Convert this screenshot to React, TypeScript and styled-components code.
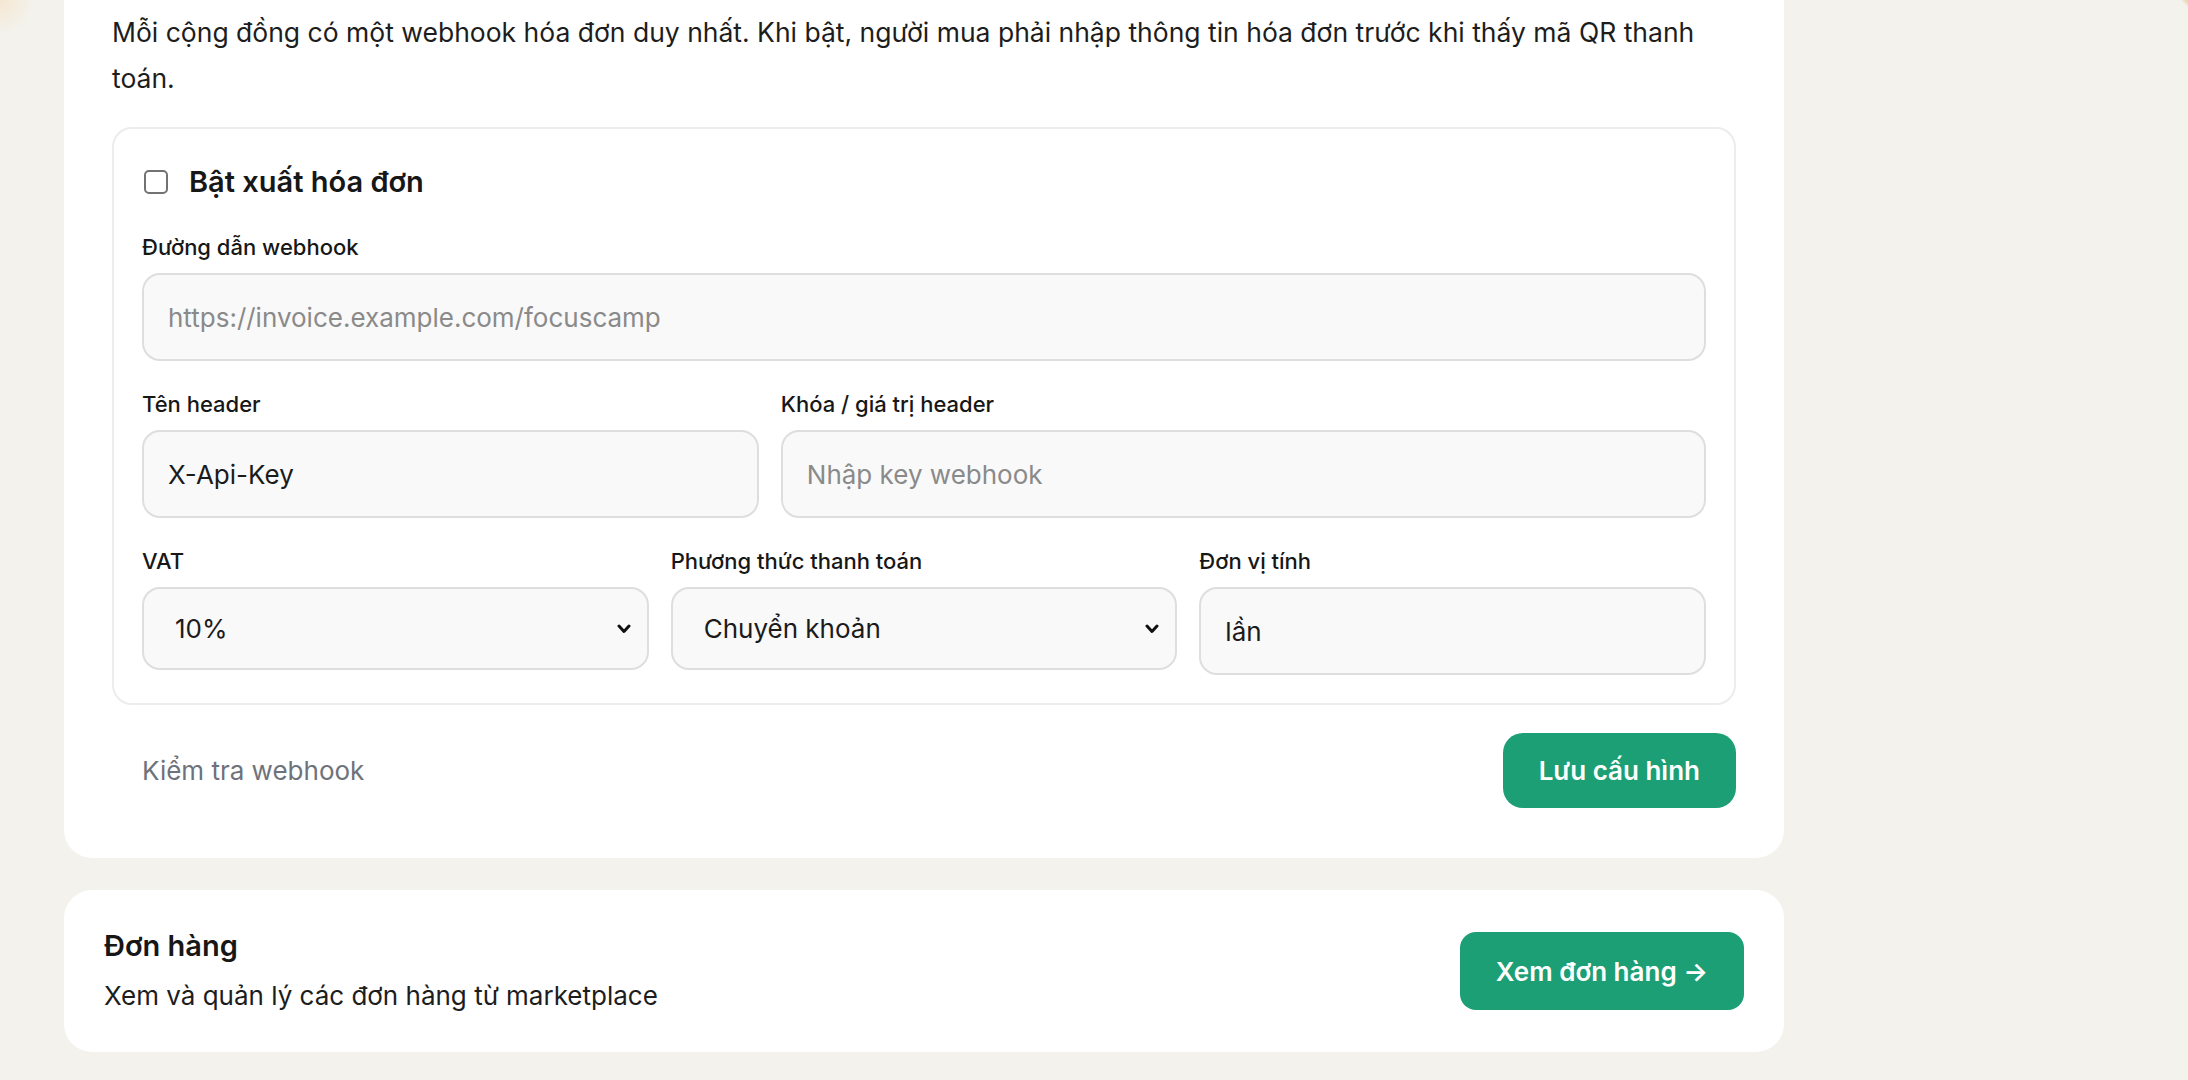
import { useState } from 'react'
import styled, { createGlobalStyle } from 'styled-components'

const GlobalStyle = createGlobalStyle`
  * {
    box-sizing: border-box;
  }

  body {
    margin: 0;
    font-family: Inter, 'Noto Sans', 'Liberation Sans', sans-serif;
    color: #1b1b1b;
    background-color: #f3f2ec;
    background-image:
      radial-gradient(circle at 0 0, rgba(248, 214, 170, 0.4), rgba(248, 214, 170, 0) 34px),
      radial-gradient(circle at 2250px -60px, #e8d7b3 0, #e8d7b3 88px, rgba(232, 215, 179, 0) 92px);
    background-repeat: no-repeat;
    min-height: 1080px;
  }
`

const Page = styled.main`
  display: flex;
  flex-direction: column;
  gap: 32px;
  width: 1720px;
  margin-left: 64px;
  padding-bottom: 27px;
`

const Card = styled.section<{ $cut?: boolean }>`
  background: #ffffff;
  border-radius: ${({ $cut }) => ($cut ? '0 0 28px 28px' : '28px')};
  padding: ${({ $cut }) => ($cut ? '9px 48px 50px' : '38px 40px')};
`

const Intro = styled.p`
  margin: 0 0 26px;
  font-size: 26.5px;
  line-height: 46px;
  color: #1d1d1d;
`

const Box = styled.div`
  border: 2px solid #ececec;
  border-radius: 20px;
  padding: 30px 28px 28px;
  display: flex;
  flex-direction: column;
  gap: 27px;
`

const ToggleRow = styled.label`
  display: flex;
  align-items: center;
  gap: 21px;
  height: 45px;
  padding-left: 2px;
  font-size: 29px;
  font-weight: 600;
  color: #171717;
  cursor: pointer;
`

const Check = styled.input`
  appearance: none;
  margin: 0;
  width: 24px;
  height: 24px;
  border: 2px solid #727272;
  border-radius: 5px;
  background: #ffffff;
`

const Grid = styled.div<{ $cols: string }>`
  display: grid;
  grid-template-columns: ${({ $cols }) => $cols};
  column-gap: 22px;
`

const Field = styled.div`
  display: flex;
  flex-direction: column;
  gap: 10px;
  min-width: 0;
`

const Label = styled.label`
  font-size: 22px;
  line-height: 32px;
  font-weight: 500;
  color: #171717;
`

const Input = styled.input`
  width: 100%;
  height: 88px;
  padding: 0 24px;
  border: 2px solid #dedede;
  border-radius: 18px;
  background: #f9f9f9;
  font-family: inherit;
  font-size: 26px;
  color: #1b1b1b;

  &::placeholder {
    color: #8a8a8a;
  }

  &:focus {
    outline: none;
    border-color: #1d9f75;
  }
`

const SelectWrap = styled.div`
  position: relative;
`

const Select = styled.select`
  appearance: none;
  width: 100%;
  height: 83px;
  padding: 0 48px 0 31px;
  border: 2px solid #dedede;
  border-radius: 18px;
  background: #f9f9f9;
  font-family: inherit;
  font-size: 26px;
  color: #1b1b1b;

  &:focus {
    outline: none;
    border-color: #1d9f75;
  }
`

const Chevron = styled.svg`
  position: absolute;
  right: 18px;
  top: 50%;
  transform: translateY(-50%);
  pointer-events: none;
`

const Actions = styled.div`
  display: flex;
  align-items: center;
  justify-content: space-between;
  margin-top: 28px;
`

const GhostButton = styled.button`
  border: none;
  background: none;
  padding: 0 0 0 30px;
  font-family: inherit;
  font-size: 26px;
  color: #6e737b;
  cursor: pointer;
`

const PrimaryButton = styled.button<{ $tall?: boolean }>`
  height: ${({ $tall }) => ($tall ? '78px' : '75px')};
  padding: 0 36px;
  border: none;
  border-radius: ${({ $tall }) => ($tall ? '16px' : '20px')};
  background: #1c9f75;
  color: #ffffff;
  font-family: inherit;
  font-size: 26px;
  font-weight: 600;
  cursor: pointer;

  &:hover {
    background: #178a65;
  }
`

const OrdersRow = styled.div`
  display: flex;
  align-items: center;
  justify-content: space-between;
`

const OrdersTitle = styled.h2`
  margin: 0 0 14px;
  font-size: 29px;
  line-height: 36px;
  font-weight: 600;
  color: #171717;
`

const OrdersText = styled.p`
  margin: 0;
  font-size: 26px;
  line-height: 36px;
  color: #1d1d1d;
`

function SelectArrow() {
  return (
    <Chevron width="14" height="10" viewBox="0 0 14 10" aria-hidden="true">
      <polyline points="2,2 7,7.5 12,2" fill="none" stroke="#111" strokeWidth="3" strokeLinecap="round" strokeLinejoin="round" />
    </Chevron>
  )
}

export default function App() {
  const [enabled, setEnabled] = useState(false)
  const [webhookUrl, setWebhookUrl] = useState('')
  const [headerName, setHeaderName] = useState('X-Api-Key')
  const [headerValue, setHeaderValue] = useState('')
  const [vat, setVat] = useState('10')
  const [payment, setPayment] = useState('bank')
  const [unit, setUnit] = useState('lần')

  return (
    <>
      <GlobalStyle />
      <Page>
        <Card $cut>
          <Intro>
            Mỗi cộng đồng có một webhook hóa đơn duy nhất. Khi bật, người mua phải nhập thông tin hóa đơn trước khi thấy mã QR thanh toán.
          </Intro>

          <Box>
            <ToggleRow>
              <Check type="checkbox" checked={enabled} onChange={(e) => setEnabled(e.target.checked)} />
              Bật xuất hóa đơn
            </ToggleRow>

            <Field>
              <Label htmlFor="webhook-url">Đường dẫn webhook</Label>
              <Input
                id="webhook-url"
                value={webhookUrl}
                onChange={(e) => setWebhookUrl(e.target.value)}
                placeholder="https://invoice.example.com/focuscamp"
              />
            </Field>

            <Grid $cols="2fr 3fr">
              <Field>
                <Label htmlFor="header-name">Tên header</Label>
                <Input id="header-name" value={headerName} onChange={(e) => setHeaderName(e.target.value)} />
              </Field>
              <Field>
                <Label htmlFor="header-value">Khóa / giá trị header</Label>
                <Input
                  id="header-value"
                  value={headerValue}
                  onChange={(e) => setHeaderValue(e.target.value)}
                  placeholder="Nhập key webhook"
                />
              </Field>
            </Grid>

            <Grid $cols="1fr 1fr 1fr">
              <Field>
                <Label htmlFor="vat">VAT</Label>
                <SelectWrap>
                  <Select id="vat" value={vat} onChange={(e) => setVat(e.target.value)}>
                    <option value="0">0%</option>
                    <option value="5">5%</option>
                    <option value="8">8%</option>
                    <option value="10">10%</option>
                  </Select>
                  <SelectArrow />
                </SelectWrap>
              </Field>
              <Field>
                <Label htmlFor="payment">Phương thức thanh toán</Label>
                <SelectWrap>
                  <Select id="payment" value={payment} onChange={(e) => setPayment(e.target.value)}>
                    <option value="bank">Chuyển khoản</option>
                    <option value="cash">Tiền mặt</option>
                  </Select>
                  <SelectArrow />
                </SelectWrap>
              </Field>
              <Field>
                <Label htmlFor="unit">Đơn vị tính</Label>
                <Input id="unit" value={unit} onChange={(e) => setUnit(e.target.value)} />
              </Field>
            </Grid>
          </Box>

          <Actions>
            <GhostButton type="button">Kiểm tra webhook</GhostButton>
            <PrimaryButton type="button">Lưu cấu hình</PrimaryButton>
          </Actions>
        </Card>

        <Card>
          <OrdersRow>
            <div>
              <OrdersTitle>Đơn hàng</OrdersTitle>
              <OrdersText>Xem và quản lý các đơn hàng từ marketplace</OrdersText>
            </div>
            <PrimaryButton type="button" $tall>
              Xem đơn hàng →
            </PrimaryButton>
          </OrdersRow>
        </Card>
      </Page>
    </>
  )
}
